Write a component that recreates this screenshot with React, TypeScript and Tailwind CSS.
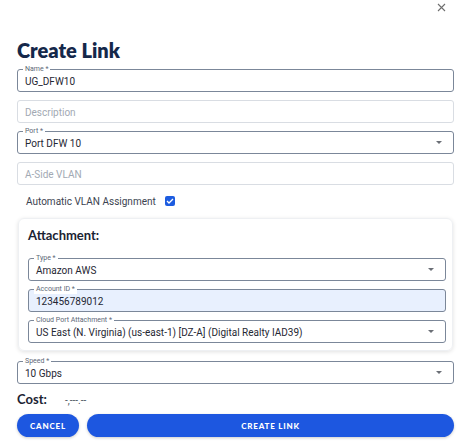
import { ReactNode } from 'react'

function Field({ label, value, placeholder, select, filled, dim }: { label?: string; value?: string; placeholder?: string; select?: boolean; filled?: boolean; dim?: boolean }) {
  return (
    <div className={`relative h-[23px] rounded-[3px] border flex items-center pl-[7px] pr-[11px] ${dim ? 'border-[#d9dde3]' : 'border-[#7b8799]'} ${filled ? 'bg-[#e8f0fe]' : 'bg-white'}`}>
      {label && (
        <span className="absolute -top-[6px] left-[5px] bg-white px-[2px] text-[7px] leading-[10px] text-[#5d6877]">{label}</span>
      )}
      <span className={`flex-1 pt-[2px] text-[10px] leading-none ${value ? 'text-[#1f2733]' : 'text-[#a2a9b3]'}`}>{value ?? placeholder}</span>
      {select && (
        <svg width="6" height="3" viewBox="0 0 6 3"><path d="M0 0h6L3 3z" fill="#6b6f76" /></svg>
      )}
    </div>
  )
}

function Section({ children }: { children: ReactNode }) {
  return <div className="flex flex-col gap-[8px]">{children}</div>
}

export default function App() {
  return (
    <div className="w-[459px] h-[442px] bg-white pl-[17px] pr-[5px] font-['Roboto',sans-serif]">
      <div className="flex justify-end pr-[8px] pt-[3px] h-[38px]">
        <svg width="9" height="9" viewBox="0 0 9 9"><path d="M1 1l7 7M8 1L1 8" stroke="#6e6e6e" strokeWidth="1.1" /></svg>
      </div>
      <h1 className="font-['Lato',sans-serif] font-extrabold text-[20px] leading-[24px] text-[#15284a]">Create Link</h1>
      <div className="mt-[7px]">
        <Section>
          <Field label="Name *" value="UG_DFW10" />
          <Field placeholder="Description" dim />
          <Field label="Port *" value="Port DFW 10" select />
          <Field placeholder="A-Side VLAN" dim />
        </Section>
      </div>
      <div className="flex items-center gap-[9px] pl-[9px] mt-[11px] h-[10px]">
        <span className="text-[10px] text-[#3b4350]">Automatic VLAN Assignment</span>
        <span className="w-[10px] h-[10px] rounded-[2px] bg-[#1d5ce0] flex items-center justify-center">
          <svg width="8" height="6" viewBox="0 0 8 6"><path d="M1 3l2 2 4-4" stroke="white" strokeWidth="1.3" fill="none" /></svg>
        </span>
      </div>
      <div className="mt-[12px] ml-[1px] mr-[1px] rounded-[6px] border border-[#eef0f3] shadow-[0_1px_4px_rgba(0,0,0,0.12)] pl-[9px] pr-[6px] pt-[8px] pb-[7px]">
        <div className="font-['Lato',sans-serif] font-bold text-[13px] leading-[16px] text-[#1b2333]">Attachment:</div>
        <div className="mt-[15px]">
          <Section>
            <Field label="Type *" value="Amazon AWS" select />
            <Field label="Account ID *" value="123456789012" filled />
            <Field label="Cloud Port Attachment *" value="US East (N. Virginia) (us-east-1) [DZ-A] (Digital Realty IAD39)" select />
          </Section>
        </div>
      </div>
      <div className="mt-[10px]">
        <Field label="Speed *" value="10 Gbps" select />
      </div>
      <div className="flex items-center mt-[9px] h-[14px]">
        <span className="w-[48px] font-['Lato',sans-serif] font-bold text-[13px] text-[#1b2333]">Cost:</span>
        <span className="text-[10px] text-[#4a5260]">-,---.--</span>
      </div>
      <div className="flex gap-[8px] mt-[7px]">
        <button className="w-[62px] h-[23px] rounded-full bg-[#1d57e0] text-white font-['Lato',sans-serif] font-black text-[8px] tracking-[0.8px] shadow-[0_1px_3px_rgba(0,0,0,0.2)]">CANCEL</button>
        <button className="flex-1 h-[23px] rounded-full bg-[#1d57e0] text-white font-['Lato',sans-serif] font-black text-[8px] tracking-[0.8px] shadow-[0_1px_3px_rgba(0,0,0,0.2)]">CREATE LINK</button>
      </div>
    </div>
  )
}
